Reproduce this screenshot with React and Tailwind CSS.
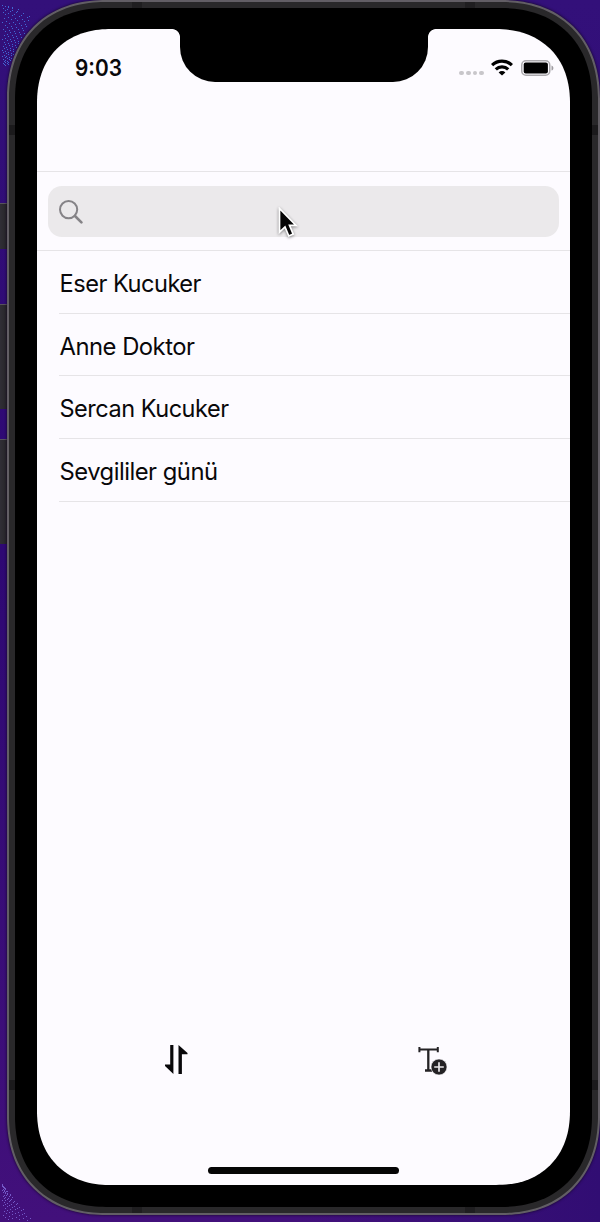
import React from "react";

const contacts = ["Eser Kucuker", "Anne Doktor", "Sercan Kucuker", "Sevgililer günü"];
const rowWidths = [141.5, 135, 169, 158];

// Speckles thin out with distance from the left edge.
function speckles(count, height, flip) {
  const dots = [];
  for (let i = 0; i < count; i++) {
    const u = (i * 0.618034) % 1;
    const v = (i + 0.5) / count;
    const y = Math.round(v * height);
    const reach = 30 * (flip ? v : v < 0.2 ? 0.3 + v * 3.5 : 1.2 - v);
    dots.push({ x: 2 + Math.round(u * reach), y });
  }
  return dots;
}

function Speckles({ count, height, flip, color }) {
  return (
    <svg width="36" height={height + 2} fill={color}>
      {speckles(count, height, flip).map((d, i) => (
        <rect key={i} x={d.x} y={d.y} width="1" height="1" />
      ))}
    </svg>
  );
}

function Backdrop() {
  return (
    <div className="absolute inset-0 flex flex-col justify-between bg-linear-to-b from-[#33107a] via-[#2e0873] via-45% to-[#42107b]">
      <div className="pt-[5px]">
        <Speckles count={120} height={60} color="#4169d4" />
      </div>
      <div className="flex items-end justify-between">
        <Speckles count={80} height={36} flip color="#7459c8" />
        <div className="h-[110px] w-[300px] bg-linear-to-r from-transparent to-[#310d73]" />
      </div>
    </div>
  );
}

function SideButtons() {
  return (
    <div className="flex w-[7px] shrink-0 flex-col pt-[203px]">
      <div className="h-[46px] border-t border-[#57535c] bg-linear-to-r from-[#302e36] to-[#262528]" />
      <div className="mt-[55px] h-[105px] border-t border-[#57535c] bg-linear-to-r from-[#302e36] to-[#262528]" />
      <div className="mt-[30px] h-[105px] border-t border-[#57535c] bg-linear-to-r from-[#302e36] to-[#262528]" />
    </div>
  );
}

function AntennaRow() {
  return (
    <div className="flex h-[6px] justify-between px-[123px]">
      <i className="w-[10px] bg-[#1f1e20]" />
      <i className="w-[10px] bg-[#1f1e20]" />
    </div>
  );
}

function AntennaColumn() {
  return (
    <div className="flex w-[6px] shrink-0 flex-col justify-between py-[117px]">
      <i className="h-[10px] bg-[#1b1a1c]" />
      <i className="h-[10px] bg-[#1b1a1c]" />
    </div>
  );
}

function Notch() {
  return (
    <div className="absolute inset-x-0 -top-px flex items-start justify-center">
      <div className="mt-px size-[8px] bg-[radial-gradient(circle_at_0%_100%,transparent_7.5px,#000_8.3px)]" />
      <div className="h-[54px] w-[248px] rounded-b-[35px] bg-black" />
      <div className="mt-px size-[8px] bg-[radial-gradient(circle_at_100%_100%,transparent_7.5px,#000_8.3px)]" />
    </div>
  );
}

function StatusBar() {
  return (
    <div className="flex h-[142px] items-start justify-between pl-[38px] pr-[16px] pt-[28px]">
      <svg width="47" height="22" className="overflow-visible">
        <text x="0" y="19" textLength="47" lengthAdjust="spacingAndGlyphs" className="fill-[#09080a] font-['Inter'] text-[22.5px] font-semibold">9:03</text>
      </svg>
      <div className="flex items-center pt-[2px]">
        <div className="mr-[7px] mt-[11px] flex gap-[2px]">
          <i className="size-[4.7px] rounded-full bg-[#c8c6ca]" />
          <i className="size-[4.7px] rounded-full bg-[#c8c6ca]" />
          <i className="size-[4.7px] rounded-full bg-[#c8c6ca]" />
          <i className="size-[4.7px] rounded-full bg-[#c8c6ca]" />
        </div>
        <svg width="22" height="17" viewBox="0 0 22 17" fill="none" stroke="#000" strokeWidth="3.2">
          <path d="M1.100 6.100a14.200 14.200 0 0 1 19.800 0" />
          <path d="M4.800 10.400a8.800 8.800 0 0 1 12.400 0" />
          <path d="M11 16.600 7.600 13.400a4.900 4.900 0 0 1 6.800 0Z" fill="#000" stroke="none" />
        </svg>
        <svg width="33" height="16" viewBox="0 0 33 16" className="ml-[8px]">
          <rect x=".75" y=".75" width="28" height="14.500" rx="4.200" fill="none" stroke="#aaa8ac" strokeWidth="1.500" />
          <rect x="2.700" y="2.600" width="24.200" height="10.800" rx="2" fill="#000" />
          <path d="M30.500 5.400c2.500.8 2.500 4.400 0 5.200Z" fill="#9f9ca1" />
        </svg>
      </div>
    </div>
  );
}

function SearchArea() {
  return (
    <div className="flex h-[80px] border-y border-[#e6e4e7] pl-[11px] pr-[11.500px] pt-[14px]">
      <div className="flex h-[51px] w-full items-center rounded-[14px] bg-[#ebe9eb] pl-[11px]">
        <svg width="24" height="24" viewBox="0 0 24 24" fill="none" stroke="#858387">
          <circle cx="9.600" cy="9.600" r="8.600" strokeWidth="2" />
          <path d="m16 16 6.400 6.400" strokeWidth="2.600" strokeLinecap="round" />
        </svg>
      </div>
    </div>
  );
}

function ContactRow({ name, width }) {
  return (
    <li className="flex h-[62.700px] items-center border-b border-[#e6e4e7]">
      <svg width={width} height="34" className="overflow-visible">
        <text x="0.500" y="26.500" textLength={width} lengthAdjust="spacingAndGlyphs" className="fill-[#09080a] font-['Inter'] text-[24px] tracking-[-0.500px]">
          {name}
        </text>
      </svg>
    </li>
  );
}

function Toolbar() {
  return (
    <div className="mt-auto flex justify-between px-[127px]">
      <svg width="24" height="32" viewBox="0 0 24 32" fill="#09080a">
        <path d="M6.200 2H9.400V31L1 23V21.600H6.200Z" />
        <path d="M14.500 2 23.500 10V11.300H17.900V31H14.500Z" />
      </svg>
      <svg width="30" height="32" viewBox="0 0 30 32" fill="none" stroke="#242225" className="mr-[-5px]">
        <path d="M1.400 4v5.200M1.200 6.500H19.800M19.800 4v5.200" strokeWidth="2" />
        <path d="M10.300 6V27.500M7 27.500H14.200" strokeWidth="2.300" />
        <circle cx="21" cy="24" r="8" fill="#242225" stroke="#fdfbff" strokeWidth=".6" />
        <path d="M16.200 24H25.800M21 19.200V28.800" stroke="#e9e7ea" strokeWidth="1.700" />
      </svg>
    </div>
  );
}

function Pointer() {
  return (
    <svg width="24" height="34" viewBox="0 0 24 34" className="absolute left-[241px] top-[178px] drop-shadow-[0_1px_1.500px_rgba(0,0,0,0.450)]">
      <path d="M1.500 1.500V25.200L7 20 10.800 29 15.200 27.100 11.500 18.400H18Z" fill="#050505" stroke="#fff" strokeWidth="1.700" />
    </svg>
  );
}

export default function App() {
  return (
    <div className="relative h-[1222px] w-[600px] overflow-hidden">
      <Backdrop />
      <div className="relative flex h-[1215px]">
        <SideButtons />
        <div className="flex w-[593px] flex-col rounded-[99px] border-2 border-[#625e65] bg-[#29282a] shadow-[0_0_3px_#12051f] [corner-shape:superellipse(1.15)]">
          <AntennaRow />
          <div className="flex min-h-0 flex-1">
            <AntennaColumn />
            <div className="flex flex-1 rounded-[91px] bg-black px-[22px] pb-[22px] pt-[21px] [corner-shape:superellipse(1.15)]">
              <main className="relative flex w-full flex-col rounded-[74px] bg-[#fdfbff] [corner-shape:superellipse(1.15)]">
                <StatusBar />
                <SearchArea />
                <ul className="ml-[22px]">
                  {contacts.map((name, i) => (
                    <ContactRow key={name} name={name} width={rowWidths[i]} />
                  ))}
                </ul>
                <Toolbar />
                <div className="mb-[11.500px] mt-[92px] h-[7px] w-[191px] self-center rounded-full bg-[#050505]" />
                <Notch />
                <Pointer />
              </main>
            </div>
            <AntennaColumn />
          </div>
          <AntennaRow />
        </div>
      </div>
    </div>
  );
}
